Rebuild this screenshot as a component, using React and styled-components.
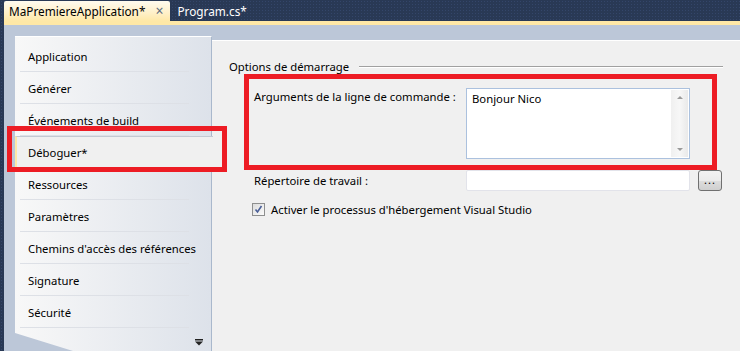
import React from "react";
import styled, { createGlobalStyle } from "styled-components";

const GlobalStyle = createGlobalStyle`
  html, body {
    margin: 0;
    padding: 0;
    background: #293955;
  }
  body {
    font-family: "Noto Sans", "Open Sans", sans-serif;
    font-size: 11.3px;
    color: #000;
  }
`;

const Page = styled.div`
  position: relative;
  width: 740px;
  height: 351px;
  overflow: hidden;
  background-color: #293955;
  background-image: radial-gradient(#34466a 1px, transparent 1px);
  background-size: 3px 3px;
  display: flex;
  flex-direction: column;
  padding-left: 4px;
  box-sizing: border-box;
`;

const TabStrip = styled.div`
  height: 21px;
  display: flex;
  align-items: flex-end;
  flex-shrink: 0;
`;

const Tab = styled.div`
  height: 20px;
  display: flex;
  align-items: center;
  gap: 8px;
  padding: 0 5px 0 ${(p) => (p.$active ? 5 : 7)}px;
  border-radius: 2px 2px 0 0;
  color: ${(p) => (p.$active ? "#000" : "#fff")};
  background: ${(p) =>
    p.$active ? "linear-gradient(#fffbef, #fff0c8 60%, #ffe8a6)" : "transparent"};
  white-space: nowrap;
  font-size: 11.8px;
`;

const TabClose = styled.span`
  color: #5d6b80;
  font-size: 14px;
  line-height: 1;
  width: 10px;
  margin-left: 2px;
`;

const YellowRule = styled.div`
  height: 4px;
  background: #ffe8a6;
  flex-shrink: 0;
`;

const Frame = styled.div`
  flex: 1;
  display: flex;
  background: #bcc7d8;
  padding: 11px 0 0 11px;
  min-height: 0;
`;

const Nav = styled.div`
  width: 196px;
  flex-shrink: 0;
  background: linear-gradient(90deg, #f8f8f8, #dde2ea);
  border-top: 1px solid #fff;
  border-right: 1px solid #a9b8cc;
  padding-top: 3px;
  position: relative;
  z-index: 1;
  clip-path: polygon(0 0, calc(100% + 4px) 0, calc(100% + 4px) 100%, 58px 100%, 0 297px);
`;

const NavItem = styled.div`
  height: 32px;
  box-sizing: border-box;
  display: flex;
  align-items: center;
  padding-left: 13px;
  position: relative;
  white-space: nowrap;

  &::after {
    content: "";
    position: absolute;
    left: 5px;
    right: 22px;
    bottom: 0;
    height: 1px;
    background: #dde0e6;
  }

  ${(p) =>
    p.$selected &&
    `
    background: #f0f0f0;
    margin-right: -2px;
    border-top: 1px solid #c3c9d2;
    border-bottom: 1px solid #c3c9d2;
    border-left: 2px solid #ffe8a6;
    padding-left: 11px;
    &::after { display: none; }
  `}
`;

const NavMore = styled.div`
  position: absolute;
  right: 8px;
  top: 297px;
`;

const Content = styled.div`
  flex: 1;
  margin-top: 4px;
  background: #f0f0f0;
  border-top: 1px solid #fff;
  padding: 17px 17px 0 17px;
`;

const GroupHeader = styled.div`
  display: flex;
  align-items: center;
  gap: 10px;
  height: 16px;
  white-space: nowrap;

  &::after {
    content: "";
    flex: 1;
    height: 1px;
    background: #a0a0a0;
    box-shadow: 0 1px 0 #fff;
  }
`;

const Form = styled.div`
  display: grid;
  grid-template-columns: 204px 224px 24px;
  grid-template-rows: 71px 21px;
  column-gap: 8px;
  row-gap: 11px;
  margin: 14px 0 0 25px;
`;

const Label = styled.div`
  padding-top: ${(p) => p.$top}px;
  white-space: nowrap;
`;

const TextBox = styled.div`
  display: flex;
  background: #fff;
  border: 1px solid #abc1de;
  box-sizing: border-box;
`;

const TextBody = styled.div`
  flex: 1;
  padding: 2px 5px;
`;

const ScrollTrack = styled.div`
  width: 17px;
  margin: 1px;
  background: linear-gradient(90deg, #f0f0f0, #f7f7f7, #e9e9e9);
  display: flex;
  flex-direction: column;
  justify-content: space-between;
  align-items: center;
  padding: 6px 0;
  box-sizing: border-box;
`;

const Arrow = styled.span`
  width: 0;
  height: 0;
  border-left: 3px solid transparent;
  border-right: 3px solid transparent;
  ${(p) => (p.$down ? "border-top" : "border-bottom")}: 3px solid #9a9a9a;
`;

const Input = styled.div`
  background: #fff;
  border: 1px solid #e2e3ea;
  border-radius: 2px;
`;

const BrowseButton = styled.div`
  border: 1px solid #707070;
  border-radius: 3px;
  background: linear-gradient(#f2f2f2, #ebebeb 50%, #dddddd 51%, #cfcfcf);
  display: flex;
  align-items: flex-end;
  justify-content: center;
  font-size: 11px;
  line-height: 1;
  padding-bottom: 5px;
  box-sizing: border-box;
  letter-spacing: 1px;
`;

const CheckRow = styled.div`
  display: flex;
  align-items: center;
  gap: 6px;
  margin: 11px 0 0 23px;
  white-space: nowrap;
`;

const CheckBox = styled.span`
  width: 13px;
  height: 13px;
  box-sizing: border-box;
  border: 1px solid #8e8f8f;
  background: linear-gradient(135deg, #dcdcdc, #fbfbfb);
  display: flex;
  align-items: center;
  justify-content: center;
`;

const Callout = styled.div`
  position: absolute;
  left: ${(p) => p.$x}px;
  top: ${(p) => p.$y}px;
  width: ${(p) => p.$w}px;
  height: ${(p) => p.$h}px;
  border: 5px solid #ed1c24;
  box-sizing: border-box;
  z-index: 5;
  pointer-events: none;
`;

const navItems = [
  "Application",
  "Générer",
  "Événements de build",
  "Déboguer*",
  "Ressources",
  "Paramètres",
  "Chemins d'accès des références",
  "Signature",
  "Sécurité",
];

export default function App() {
  return (
    <Page>
      <GlobalStyle />
      <TabStrip>
        <Tab $active>
          MaPremiereApplication*
          <TabClose>×</TabClose>
        </Tab>
        <Tab>Program.cs*</Tab>
      </TabStrip>
      <YellowRule />
      <Frame>
        <Nav>
          {navItems.map((item) => (
            <NavItem key={item} $selected={item === "Déboguer*"}>
              {item}
            </NavItem>
          ))}
          <NavMore>
            <svg width="8" height="7" viewBox="0 0 8 7">
              <rect x="0" y="0" width="8" height="1.5" fill="#222" />
              <path d="M0 2.5 L8 2.5 L4 6.5 Z" fill="#222" />
            </svg>
          </NavMore>
        </Nav>
        <Content>
          <GroupHeader>Options de démarrage</GroupHeader>
          <Form>
            <Label $top={1}>Arguments de la ligne de commande :</Label>
            <TextBox>
              <TextBody>Bonjour Nico</TextBody>
              <ScrollTrack>
                <Arrow />
                <Arrow $down />
              </ScrollTrack>
            </TextBox>
            <div />
            <Label $top={3}>Répertoire de travail :</Label>
            <Input />
            <BrowseButton>...</BrowseButton>
          </Form>
          <CheckRow>
            <CheckBox>
              <svg width="9" height="9" viewBox="0 0 9 9">
                <path d="M1.5 4.5 L3.5 7 L7.5 1" stroke="#4a5f97" strokeWidth="1.6" fill="none" />
              </svg>
            </CheckBox>
            Activer le processus d'hébergement Visual Studio
          </CheckRow>
        </Content>
      </Frame>
      <Callout $x={7} $y={126} $w={220} $h={46} />
      <Callout $x={244} $y={74} $w={473} $h={96} />
    </Page>
  );
}
